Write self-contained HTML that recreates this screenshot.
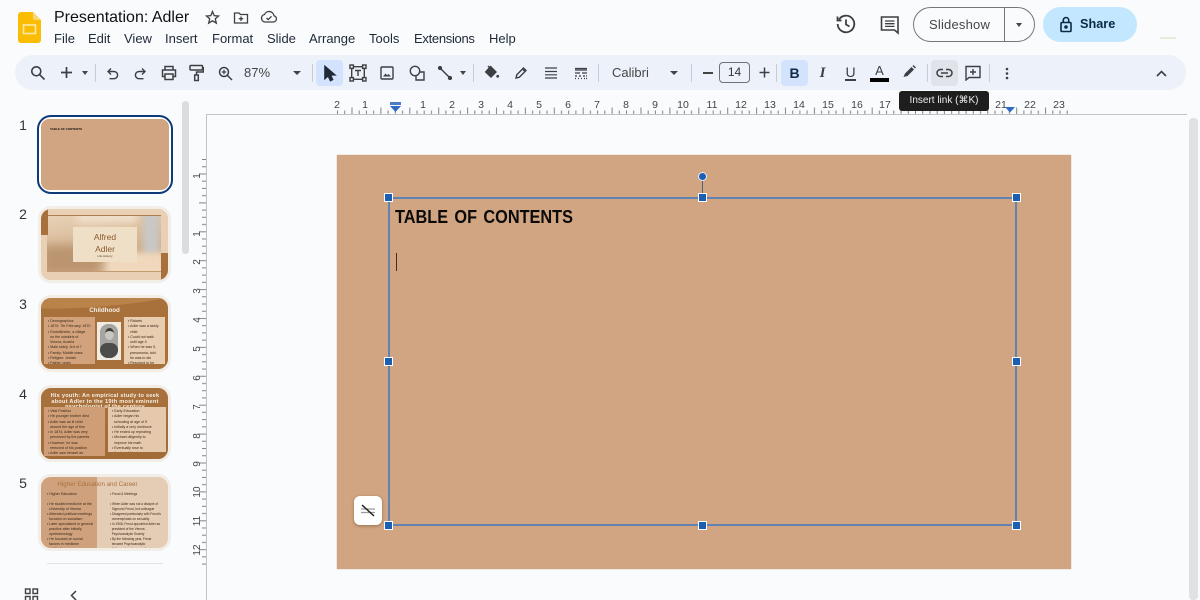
<!DOCTYPE html>
<html><head><meta charset="utf-8"><title>Presentation: Adler</title>
<style>
html,body{margin:0;padding:0;background:#f9fbfd}
body{width:1200px;height:600px;position:relative;overflow:hidden;font-family:"Liberation Sans",sans-serif;color:#202124}
.a{position:absolute}
.m{position:absolute;top:31px;font-size:13px;line-height:16px;color:#1f2937}
svg.i{position:absolute;fill:none;stroke:#3c4043;stroke-width:1.5}
.sep{position:absolute;top:64px;width:1px;height:18px;background:#c7cdd6}
.rl{position:absolute;top:99px;width:20px;text-align:center;font-size:10.5px;line-height:12px;color:#444}
.vl{position:absolute;left:193px;width:20px;height:12px;margin-left:-5px;text-align:center;font-size:10px;line-height:12px;color:#444;transform:rotate(-90deg)}
.num{position:absolute;font-size:14px;line-height:16px;color:#333;width:14px;text-align:center}
.th{position:absolute;left:38px;width:133px;height:77px;box-sizing:border-box;border:3px solid #f2ede7;border-radius:13px;overflow:hidden;background:#fff}
.h{position:absolute;background:#1a5fb4;border:1px solid #fff;box-sizing:border-box;width:9px;height:9px}
.t{position:absolute;font-size:3.6px;line-height:5.3px;color:#3a2818;white-space:pre}
</style></head><body>

<!-- logo -->
<svg class="a" style="left:18px;top:12px" width="24" height="31" viewBox="0 0 24 31"><path d="M3 0H15L23 8V28a3 3 0 0 1-3 3H3a3 3 0 0 1-3-3V3a3 3 0 0 1 3-3Z" fill="#fbbc04"/><path d="M15 0L23 8H17a2 2 0 0 1-2-2Z" fill="#f7d774"/><rect x="5.5" y="13" width="12" height="8.5" fill="none" stroke="#fde9a8" stroke-width="1.6"/></svg>

<div class="a" style="left:54px;top:8px;font-size:16px;line-height:19px;color:#111">Presentation: Adler</div>
<svg class="i" style="left:205px;top:10px;stroke-width:1.3" width="15" height="15" viewBox="0 0 15 15"><path d="M7.5 1.5L9.2 5.6 13.6 6 10.3 8.8 11.3 13.1 7.5 10.8 3.7 13.1 4.7 8.8 1.4 6 5.8 5.6Z"/></svg>
<svg class="i" style="left:233px;top:10px;stroke-width:1.3" width="16" height="15" viewBox="0 0 16 15"><path d="M1.5 3H6L7.5 4.5H14.5V13H1.5Z"/><path d="M8 6.5V11M5.8 8.7H10.2"/></svg>
<svg class="i" style="left:260px;top:9px;stroke-width:1.3" width="18" height="16" viewBox="0 0 18 16"><path d="M5 13H13.5a3.2 3.2 0 0 0 .5-6.3A5 5 0 0 0 4.5 5.5 3.8 3.8 0 0 0 5 13Z"/><path d="M6.5 9L8.2 10.6 11.5 7.3"/></svg>

<div class="m" style="left:54px">File</div>
<div class="m" style="left:88px">Edit</div>
<div class="m" style="left:124px">View</div>
<div class="m" style="left:165px">Insert</div>
<div class="m" style="left:212px">Format</div>
<div class="m" style="left:267px">Slide</div>
<div class="m" style="left:309px">Arrange</div>
<div class="m" style="left:369px">Tools</div>
<div class="m" style="left:414px;letter-spacing:-.3px">Extensions</div>
<div class="m" style="left:489px">Help</div>

<!-- top right -->
<svg class="i" style="left:835px;top:13px;stroke-width:1.8" width="22" height="22" viewBox="0 0 22 22"><path d="M4 6.5A8.3 8.3 0 1 1 2.7 11"/><path d="M2.5 3.5V7.5H6.5"/><path d="M11 6.5V11.5L14.5 13.5"/></svg>
<svg class="i" style="left:880px;top:15px;stroke-width:1.6" width="20" height="20" viewBox="0 0 20 20"><path d="M1.5 2H18V18L14.5 15H1.5Z"/><path d="M5 6H14.5M5 8.7H14.5M5 11.4H14.5" stroke-width="1.3"/></svg>
<div class="a" style="left:913px;top:7px;width:122px;height:35px;box-sizing:border-box;border:1px solid #747775;border-radius:18px"></div>
<div class="a" style="left:1004px;top:7px;width:1px;height:35px;background:#747775"></div>
<div class="a" style="left:929px;top:16px;font-size:13px;line-height:17px;color:#444746;letter-spacing:.2px">Slideshow</div>
<div class="a" style="left:1016px;top:23px;border-left:3.5px solid transparent;border-right:3.5px solid transparent;border-top:4px solid #444"></div>
<div class="a" style="left:1043px;top:7px;width:94px;height:35px;border-radius:18px;background:#c2e7ff"></div>
<svg class="a" style="left:1059px;top:16px" width="14" height="17" viewBox="0 0 14 17" fill="none" stroke="#0b2a45" stroke-width="1.6"><rect x="2" y="6.5" width="10" height="9" rx="1"/><path d="M4.3 6.5V4.2a2.7 2.7 0 0 1 5.4 0V6.5"/><circle cx="7" cy="11" r="1" fill="#0b2a45"/></svg>
<div class="a" style="left:1080px;top:16px;font-size:12.7px;line-height:17px;font-weight:bold;color:#0b2a45">Share</div>
<div class="a" style="left:1160px;top:37px;width:16px;height:2px;border-radius:0 0 8px 8px;background:#e6ecd9"></div>

<!-- toolbar -->
<div class="a" style="left:15px;top:55px;width:1171px;height:35px;border-radius:18px;background:#edf2fa"></div>
<div class="a" style="left:316px;top:60px;width:27px;height:26px;border-radius:4px;background:#d3e3fd"></div>
<div class="a" style="left:781px;top:60px;width:27px;height:26px;border-radius:4px;background:#d3e3fd"></div>
<div class="a" style="left:931px;top:60px;width:27px;height:26px;border-radius:4px;background:#e0e4ea"></div>

<svg class="i" style="left:30px;top:65px;stroke-width:1.6" width="16" height="16" viewBox="0 0 16 16"><circle cx="6.3" cy="6.3" r="4.5"/><path d="M9.7 9.7L14.5 14.5"/></svg>
<svg class="i" style="left:60px;top:66px;stroke-width:1.7" width="13" height="13" viewBox="0 0 13 13"><path d="M6.5 1V12M1 6.5H12"/></svg>
<div class="a" style="left:82px;top:71px;border-left:3.5px solid transparent;border-right:3.5px solid transparent;border-top:4px solid #444"></div>
<div class="sep" style="left:95px"></div>
<svg class="i" style="left:106px;top:67px;stroke-width:1.4" width="13" height="13" viewBox="0 0 13 13"><path d="M5 1.5L2 4.5 5 7.5"/><path d="M2 4.5H8a3.6 3.6 0 0 1 0 7.2H3.5"/></svg>
<svg class="i" style="left:134px;top:67px;stroke-width:1.4" width="13" height="13" viewBox="0 0 13 13"><path d="M8 1.5L11 4.5 8 7.5"/><path d="M11 4.5H5a3.6 3.6 0 0 0 0 7.2H9.5"/></svg>
<svg class="i" style="left:161px;top:65px;stroke-width:1.5" width="16" height="16" viewBox="0 0 16 16"><path d="M4 5V1.5H12V5"/><path d="M4 11.5H1.5V5H14.5V11.5H12"/><rect x="4" y="9" width="8" height="5.5"/></svg>
<svg class="i" style="left:189px;top:64px;stroke-width:1.5" width="15" height="18" viewBox="0 0 15 18"><rect x="1" y="1.5" width="12.5" height="4.5" rx=".8"/><path d="M13.5 3.7H14.5V8H7.5V11"/><rect x="5.7" y="11" width="3.6" height="5.5"/></svg>
<svg class="i" style="left:218px;top:66px;stroke-width:1.5" width="15" height="15" viewBox="0 0 15 15"><circle cx="6" cy="6" r="4.5"/><path d="M9.4 9.4L14 14"/><path d="M6 3.8V8.2M3.8 6H8.2" stroke-width="1.2"/></svg>
<div class="a" style="left:244px;top:65px;font-size:13px;line-height:16px;color:#444746">87%</div>
<div class="a" style="left:293px;top:71px;border-left:4px solid transparent;border-right:4px solid transparent;border-top:4.5px solid #444"></div>
<div class="sep" style="left:312px"></div>
<svg class="i" style="left:323px;top:65px;stroke:#1f2937;stroke-width:1.6" width="14" height="17" viewBox="0 0 14 17"><path d="M2 1.5V13.5L5.2 10.6 7.5 15.5 9.5 14.5 7.3 9.8H11.7Z" fill="#1f2937"/></svg>
<svg class="i" style="left:349px;top:64px;stroke-width:1.4" width="18" height="18" viewBox="0 0 18 18"><rect x="2.7" y="2.7" width="12.6" height="12.6"/><rect x="1" y="1" width="3.4" height="3.4" fill="#edf2fa"/><rect x="13.6" y="1" width="3.4" height="3.4" fill="#edf2fa"/><rect x="1" y="13.6" width="3.4" height="3.4" fill="#edf2fa"/><rect x="13.6" y="13.6" width="3.4" height="3.4" fill="#edf2fa"/><path d="M6 6.5H12M9 6.5V12"/></svg>
<svg class="i" style="left:380px;top:66px;stroke-width:1.4" width="14" height="14" viewBox="0 0 14 14"><rect x="1" y="1" width="12" height="12" rx="1"/><path d="M3 10.5L5.5 7.5 7.2 9.3 8.5 8 11 10.5H3Z" fill="#3c4043" stroke="none"/></svg>
<svg class="i" style="left:409px;top:65px;stroke-width:1.4" width="16" height="16" viewBox="0 0 16 16"><circle cx="6" cy="6" r="4.7"/><path d="M10.5 7H15V15H7V11"/></svg>
<svg class="i" style="left:438px;top:66px;stroke-width:1.5" width="14" height="14" viewBox="0 0 14 14"><path d="M2 2L12 12"/><circle cx="2" cy="2" r="1.4" fill="#3c4043"/><circle cx="12" cy="12" r="1.4" fill="#3c4043"/></svg>
<div class="a" style="left:460px;top:71px;border-left:3.5px solid transparent;border-right:3.5px solid transparent;border-top:4px solid #444"></div>
<div class="sep" style="left:473px"></div>
<svg class="i" style="left:484px;top:65px;stroke-width:1.4" width="16" height="16" viewBox="0 0 16 16"><path d="M6.5 1.5L12 7 7 12 1.7 7Z" fill="#3c4043" stroke="#3c4043"/><path d="M4 1L7 4"/><circle cx="13.7" cy="11.3" r="1.4" fill="#3c4043" stroke="none"/></svg>
<svg class="i" style="left:514px;top:65px;stroke-width:1.4" width="14" height="15" viewBox="0 0 14 15"><path d="M2 13L2.8 9.7 9.5 3 12 5.5 5.3 12.2Z"/><path d="M8.5 4L11 6.5"/></svg>
<svg class="i" style="left:544px;top:66px;stroke-width:1.2" width="14" height="14" viewBox="0 0 14 14"><path d="M1 2H13M1 5.5H13M1 8.8H13M1 12H13"/></svg>
<svg class="i" style="left:574px;top:66px;stroke-width:1.2" width="14" height="14" viewBox="0 0 14 14"><path d="M1 2.5H13M1 4H13"/><path d="M1 7H6M8 7H13"/><path d="M1 10H3M5 10H7M9 10H11M12 10H13M1 12.5H2M4 12.5H5M7 12.5H8M10 12.5H11M12 12.5H13" /></svg>
<div class="sep" style="left:598px"></div>
<div class="a" style="left:612px;top:65px;font-size:13px;line-height:16px;color:#444746">Calibri</div>
<div class="a" style="left:670px;top:71px;border-left:4px solid transparent;border-right:4px solid transparent;border-top:4.5px solid #444"></div>
<div class="sep" style="left:691px"></div>
<div class="a" style="left:703px;top:72px;width:10px;height:1.5px;background:#444"></div>
<div class="a" style="left:719px;top:62px;width:31px;height:21px;box-sizing:border-box;border:1px solid #6f7378;border-radius:4px;text-align:center;font-size:12px;line-height:19px;color:#333">14</div>
<svg class="i" style="left:759px;top:67px;stroke-width:1.5" width="11" height="11" viewBox="0 0 11 11"><path d="M5.5 .5V10.5M.5 5.5H10.5"/></svg>
<div class="sep" style="left:776px"></div>
<div class="a" style="left:781px;top:64px;width:27px;text-align:center;font-size:14px;line-height:18px;font-weight:bold;color:#0f2a4a">B</div>
<div class="a" style="left:809px;top:64px;width:27px;text-align:center;font-size:15px;line-height:18px;font-weight:bold;font-style:italic;font-family:'Liberation Serif',serif;color:#3c4043">I</div>
<div class="a" style="left:837px;top:64px;width:27px;text-align:center;font-size:14px;line-height:17px;color:#3c4043">U</div>
<div class="a" style="left:845px;top:79px;width:11px;height:1.5px;background:#3c4043"></div>
<div class="a" style="left:866px;top:63px;width:27px;text-align:center;font-size:13px;line-height:16px;color:#3c4043">A</div>
<div class="a" style="left:870px;top:78px;width:19px;height:4px;background:#000"></div>
<svg class="a" style="left:902px;top:64px" width="15" height="15" viewBox="0 0 15 15" fill="#3c4043"><path d="M1.5 13L3 9.5 9.5 3 12 5.5 5.5 12Z"/><path d="M10.5 2L11.5 1 14 3.5 13 4.5Z"/></svg>
<div class="sep" style="left:927px"></div>
<svg class="i" style="left:936px;top:67px;stroke-width:1.5" width="17" height="12" viewBox="0 0 17 12"><path d="M7 2.5H4.5a3.5 3.5 0 0 0 0 7H7"/><path d="M10 2.5H12.5a3.5 3.5 0 0 1 0 7H10"/><path d="M5 6H12"/></svg>
<svg class="i" style="left:965px;top:65px;stroke-width:1.4" width="16" height="16" viewBox="0 0 16 16"><path d="M1 1.5H15V12.5H4L1 15Z"/><path d="M8 4V10M5 7H11"/></svg>
<div class="sep" style="left:989px"></div>
<svg class="a" style="left:1005px;top:67px" width="4" height="13" viewBox="0 0 4 13" fill="#3c4043"><circle cx="2" cy="2" r="1.3"/><circle cx="2" cy="6.5" r="1.3"/><circle cx="2" cy="11" r="1.3"/></svg>
<svg class="i" style="left:1155px;top:69px;stroke-width:1.6" width="13" height="9" viewBox="0 0 13 9"><path d="M2 7L6.5 2.5 11 7"/></svg>

<!-- rulers -->
<div class="a" style="left:207px;top:113.5px;width:980px;height:1px;background:#bfc2c6"></div>
<div class="a" style="left:206px;top:114px;width:1px;height:486px;background:#bfc2c6"></div>
<svg class="a" style="left:330px;top:104px" width="745" height="10">
<defs><pattern id="hp" x="7" width="28.9" height="10" patternUnits="userSpaceOnUse"><path d="M.5 6.5V10M7.7 6.5V10M22.2 6.5V10" stroke="#80868b" stroke-width="1"/><path d="M15 3.5V10" stroke="#80868b" stroke-width="1"/></pattern></defs>
<rect x="5" width="733" height="10" fill="url(#hp)"/></svg>
<div class="rl" style="left:327px">2</div><div class="rl" style="left:355px">1</div>
<div class="rl" style="left:413px">1</div><div class="rl" style="left:442px">2</div><div class="rl" style="left:471px">3</div><div class="rl" style="left:500px">4</div><div class="rl" style="left:529px">5</div><div class="rl" style="left:558px">6</div><div class="rl" style="left:587px">7</div><div class="rl" style="left:616px">8</div><div class="rl" style="left:645px">9</div><div class="rl" style="left:673px">10</div><div class="rl" style="left:702px">11</div><div class="rl" style="left:731px">12</div><div class="rl" style="left:760px">13</div><div class="rl" style="left:789px">14</div><div class="rl" style="left:818px">15</div><div class="rl" style="left:847px">16</div><div class="rl" style="left:875px">17</div><div class="rl" style="left:991px">21</div><div class="rl" style="left:1020px">22</div><div class="rl" style="left:1049px">23</div>
<svg class="a" style="left:390px;top:102px" width="12" height="11"><path d="M0 0H11V3H0Z" fill="#4a7cc7"/><path d="M0 4H11L5.5 10Z" fill="#2f6ac4"/></svg>
<svg class="a" style="left:1005px;top:107px" width="10" height="6"><path d="M0 0H10L5 5.5Z" fill="#2f6ac4"/></svg>

<svg class="a" style="left:196px;top:155px" width="10" height="415">
<defs><pattern id="vp" y="4" width="10" height="28.9" patternUnits="userSpaceOnUse"><path d="M6 .5H10M6 7.7H10M6 22.2H10" stroke="#80868b" stroke-width="1"/><path d="M3 15H10" stroke="#80868b" stroke-width="1"/></pattern></defs>
<rect width="10" height="413" fill="url(#vp)"/></svg>
<div class="vl" style="top:170px">1</div><div class="vl" style="top:228px">1</div><div class="vl" style="top:256px">2</div><div class="vl" style="top:285px">3</div><div class="vl" style="top:314px">4</div><div class="vl" style="top:343px">5</div><div class="vl" style="top:372px">6</div><div class="vl" style="top:401px">7</div><div class="vl" style="top:430px">8</div><div class="vl" style="top:458px">9</div><div class="vl" style="top:486px">10</div><div class="vl" style="top:515px">11</div><div class="vl" style="top:544px">12</div>

<!-- tooltip -->
<div class="a" style="left:899px;top:91px;width:90px;height:20px;border-radius:3px;background:#1e1e1e;color:#eee;font-size:10px;line-height:20px;text-align:center;white-space:nowrap">Insert link (⌘K)</div>

<!-- scrollbars -->
<div class="a" style="left:182px;top:101px;width:7px;height:153px;border-radius:4px;background:#dadce0"></div>
<div class="a" style="left:1189px;top:118px;width:9px;height:482px;border-radius:4px;background:#dfe1e5"></div>

<!-- slide -->
<div class="a" style="left:337px;top:155px;width:734px;height:414px;background:#d1a581;box-shadow:0 0 1px #b79a84"></div>
<div class="a" style="left:388px;top:196.5px;width:629px;height:329.5px;box-sizing:border-box;border:2px solid #6481b4"></div>
<div class="a" style="left:702px;top:178px;width:1px;height:19px;background:#53617a"></div>
<div class="a" style="left:698px;top:172px;width:9px;height:9px;box-sizing:border-box;border-radius:50%;background:#1a5fb4;border:1px solid #e6ecf5"></div>
<div class="h" style="left:384px;top:193px"></div><div class="h" style="left:698px;top:193px"></div><div class="h" style="left:1012px;top:193px"></div>
<div class="h" style="left:384px;top:357px"></div><div class="h" style="left:1012px;top:357px"></div>
<div class="h" style="left:384px;top:521px"></div><div class="h" style="left:698px;top:521px"></div><div class="h" style="left:1012px;top:521px"></div>
<div class="a" style="left:395px;top:206px;font-size:18px;line-height:23px;font-weight:bold;color:#0a0a0a;white-space:nowrap;word-spacing:2px;transform-origin:0 0;transform:scaleX(.905)">TABLE OF CONTENTS</div>
<div class="a" style="left:395.5px;top:253px;width:1.5px;height:18px;background:#4a2c14"></div>
<div class="a" style="left:354px;top:496px;width:28px;height:29px;border-radius:6px;background:#fff;box-shadow:0 1px 3px rgba(90,60,30,.5)"></div>
<svg class="a" style="left:360px;top:503px" width="16" height="15" fill="none"><path d="M1 6H15M1 9.5H15" stroke="#9a9a9a" stroke-width="1.2"/><path d="M2 2L14 13" stroke="#222" stroke-width="1.5"/></svg>

<!-- thumbnails -->
<div class="num" style="left:16px;top:117px">1</div>
<div class="num" style="left:16px;top:206px">2</div>
<div class="num" style="left:16px;top:296px">3</div>
<div class="num" style="left:16px;top:386px">4</div>
<div class="num" style="left:16px;top:475px">5</div>

<div class="a" style="left:37px;top:115px;width:136px;height:79px;box-sizing:border-box;border:2.5px solid #0f3a78;border-radius:14px;background:#fff"></div>
<div class="a" style="left:41px;top:119px;width:128px;height:71px;border-radius:8px;background:#d1a581"></div>
<div class="a" style="left:50px;top:127px;font-size:3px;line-height:4px;font-weight:bold;color:#111;white-space:pre">TABLE OF CONTENTS</div>

<div class="th" style="top:206px;background:#e9cfb4">
<div class="a" style="left:0;top:0;width:127px;height:71px;background:#e9cfb4"></div>
<div class="a" style="left:6px;top:6px;width:114px;height:57px;overflow:hidden;background:linear-gradient(170deg,#e8d2b8 0%,#dcc09f 35%,#cfb08c 65%,#ecd3b8 100%)">
<div class="a" style="left:-6px;top:30px;width:60px;height:30px;background:#bb9570;filter:blur(5px)"></div>
<div class="a" style="left:30px;top:-8px;width:60px;height:16px;background:#f0dfca;filter:blur(4px)"></div>
<div class="a" style="left:96px;top:-2px;width:16px;height:42px;background:#c9c7c4;filter:blur(3px)"></div>
<div class="a" style="left:60px;top:38px;width:56px;height:22px;background:#f1d8bd;filter:blur(3px)"></div>
</div>
<div class="a" style="left:6px;top:6px;width:114px;height:1px;background:#ab7f4f"></div>
<div class="a" style="left:6px;top:62px;width:114px;height:1px;background:#c49a70"></div>
<div class="a" style="left:0;top:0;width:7px;height:26px;background:#a8713c"></div>
<div class="a" style="left:120px;top:44px;width:7px;height:27px;background:#a8713c"></div>
<div class="a" style="left:32px;top:18px;width:64px;height:35px;background:#efdfc6"></div>
<div class="a" style="left:32px;top:22px;width:64px;text-align:center;font-size:8.5px;line-height:12px;color:#8a5a2e">Alfred<br>Adler</div>
<div class="a" style="left:32px;top:45px;width:64px;text-align:center;font-size:3px;line-height:4px;color:#5a4028">Life History</div>
</div>

<div class="th" style="top:295px;background:#a8713c">
<div class="a" style="left:-20px;top:-10px;width:170px;height:18px;border-radius:50%;background:#b98349;transform:rotate(-5deg)"></div>
<div class="a" style="left:0;top:8px;width:127px;text-align:center;font-size:6.2px;line-height:10px;font-weight:bold;color:#f7efe4">Childhood</div>
<div class="a" style="left:3px;top:19px;width:51px;height:47px;background:#d2a27c;overflow:hidden">
<div class="t" style="left:4px;top:2px">▪ Demographics
• 1870: 7th February, 1870
• Rudolfsheim, a village
  on the outskirts of
  Vienna, Austria
• Male sickly, 3rd of 7
• Family: Middle class
• Religion: Jewish
• Father: grain
  merchant</div></div>
<div class="a" style="left:56px;top:24px;width:24px;height:38px;background:#f2ebe2"></div>
<div class="a" style="left:59px;top:26px;width:18px;height:34px;border-radius:8px;background:#a5a5a1;overflow:hidden">
<div class="a" style="left:5px;top:4px;width:9px;height:12px;border-radius:50%;background:#c8c6c0;border-top:3px solid #3b3b39;box-sizing:border-box"></div>
<div class="a" style="left:0;top:19px;width:18px;height:15px;border-radius:7px 7px 0 0;background:#4c4c4a"></div>
</div>
<div class="a" style="left:83px;top:19px;width:41px;height:47px;background:#e8cdb0;overflow:hidden">
<div class="t" style="left:4px;top:2px">▪ Rickets
• Adler was a sickly
  child
• Could not walk
  until age 4
• When he was 5,
  pneumonia, told
  he was to die
• Resolved to be
  a physician</div></div>
</div>

<div class="th" style="top:385px;background:linear-gradient(#a8713c,#a26c39)">
<div class="a" style="left:-6px;top:6px;width:140px;text-align:center;font-size:5.6px;line-height:5.5px;font-weight:bold;letter-spacing:.25px;color:#f7efe4;white-space:nowrap">His youth: An empirical study to seek<br>about Adler in the 19th most eminent<br>psychologist of the century</div>
<div class="a" style="left:3px;top:19px;width:61px;height:49px;background:#cf9e76;overflow:hidden">
<div class="t" style="left:4px;top:2px">▪ Vital Position
• He younger brother died
• Adler was an ill child
  around the age of five
• In 1874, Adler was very
  perceived by the parents
• However, he was
  removed of his position
• Adler saw himself as</div></div>
<div class="a" style="left:67px;top:19px;width:58px;height:45px;background:#e6c9ad;overflow:hidden">
<div class="t" style="left:4px;top:2px">▪ Early Education
• Adler began his
  schooling at age of 9
• Initially a very mediocre
• He ended up repeating
• Michael diligently to
  improve his math
• Eventually rose to
  the top of his class</div></div>
</div>

<div class="th" style="top:474px;background:#e5ccb4">
<div class="a" style="left:0;top:0;width:56px;height:71px;background:#cfa17c"></div>
<div class="a" style="left:0;top:3px;width:113px;text-align:center;font-size:6.2px;line-height:9px;color:#a8713c;white-space:nowrap">Higher Education and Career</div>
<div class="t" style="left:6px;top:15px;line-height:5px">▪ Higher Education

• He studied medicine at the
  University of Vienna
• Attended political meetings
  focused on socialism
• Later specialized in general
  practice after initially
  ophthalmology
• He focused on social
  factors in medicine
  publication</div>
<div class="t" style="left:69px;top:15px;font-size:3.2px;line-height:5px">▪ Freud &amp; Meetings

• When Adler was not a disciple of
  Sigmund Freud, but colleague
• Disagreed particularly with Freud's
  overemphasis on sexuality
• In 1908, Freud appointed Adler as
  president of the Vienna
  Psychoanalytic Society
• By the following year, Freud
  became Psychoanalytic
• Adler resigned as president</div>
</div>

<div class="a" style="left:47px;top:563px;width:116px;height:1px;background:#e3e3e3"></div>

<svg class="i" style="left:24px;top:588px;stroke-width:1.4" width="15" height="12" viewBox="0 0 15 12"><rect x="1.5" y="1" width="4.5" height="4.5"/><rect x="9" y="1" width="4.5" height="4.5"/><rect x="1.5" y="8.5" width="4.5" height="4.5"/><rect x="9" y="8.5" width="4.5" height="4.5"/></svg>
<svg class="i" style="left:69px;top:590px;stroke-width:1.5" width="9" height="10" viewBox="0 0 9 10"><path d="M7 1L2.5 5.5 7 10"/></svg>

</body></html>
